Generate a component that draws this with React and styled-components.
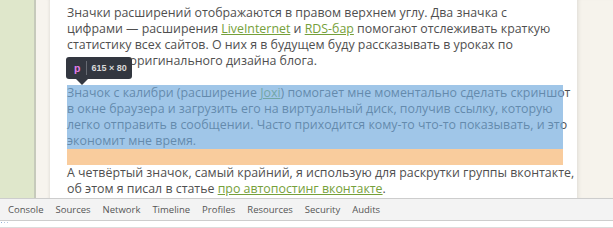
import React from "react";
import styled, { createGlobalStyle } from "styled-components";

const GlobalStyle = createGlobalStyle`
  html, body {
    margin: 0;
    padding: 0;
    overflow: hidden;
    background: #fff;
  }
`;

const tabs = [
  "Console",
  "Sources",
  "Network",
  "Timeline",
  "Profiles",
  "Resources",
  "Security",
  "Audits",
];

function App() {
  return (
    <Page>
      <GlobalStyle />
      <Viewport>
        <SiteSidebar />
        <Gutter />
        <Article>
          <Paragraph>
            Значки расширений отображаются в правом верхнем углу. Два значка с
            <br />
            цифрами — расширения <TextLink>LiveInternet</TextLink> и{" "}
            <TextLink>RDS-бар</TextLink> помогают отслеживать краткую
            <br />
            статистику всех сайтов. О них я в будущем буду рассказывать в уроках по
            <br />
            созданию оригинального дизайна блога.
          </Paragraph>
          <Highlighted>
            <Tooltip>
              <TagName>p</TagName>
              <Divider />
              <Size>615 × 80</Size>
            </Tooltip>
            Значок с калибри (расширение <TextLink>Joxi</TextLink>) помогает мне
            моментально сделать скриншот
            <br />
            в окне браузера и загрузить его на виртуальный диск, получив ссылку, которую
            <br />
            легко отправить в сообщении. Часто приходится кому-то что-то показывать, и это
            <br />
            экономит мне время.
          </Highlighted>
          <Paragraph>
            А четвёртый значок, самый крайний, я использую для раскрутки группы вконтакте,
            <br />
            об этом я писал в статье <TextLink>про автопостинг вконтакте</TextLink>.
          </Paragraph>
        </Article>
        <RightSide />
      </Viewport>
      <DevTools>
        <TabBar>
          {tabs.map((t) => (
            <Tab key={t}>{t}</Tab>
          ))}
        </TabBar>
        <ConsoleLine>
          <svg width="12" height="4" viewBox="0 0 12 4">
            <rect x="1" y="1" width="1" height="1" fill="#8fb0d8" />
            <rect x="4" y="1" width="1" height="1" fill="#b5c8e0" />
            <rect x="7" y="1" width="1" height="1" fill="#b5c8e0" />
          </svg>
        </ConsoleLine>
      </DevTools>
    </Page>
  );
}

const Page = styled.div`
  width: 613px;
  height: 228px;
  display: flex;
  flex-direction: column;
  overflow: hidden;
`;

const Viewport = styled.div`
  height: 198px;
  display: flex;
  overflow: hidden;
`;

const SiteSidebar = styled.div`
  width: 34px;
  flex-shrink: 0;
  background: #dfe7cb;
  border-right: 2px solid #c6cabb;
`;

const Gutter = styled.div`
  width: 14px;
  flex-shrink: 0;
  background: #f7f4ee;
  box-shadow: inset -3px 0 3px -2px rgba(0, 0, 0, 0.08);
`;

const Article = styled.div`
  width: 510px;
  flex-shrink: 0;
  background: #fff;
  padding: 5px 0 0 17px;
  font-family: "Open Sans", "Noto Sans", sans-serif;
  font-size: 12.38px;
  line-height: 16px;
  color: #4f4f4f;
`;

const RightSide = styled.div`
  flex: 1;
  background: #f6f3ec;
  box-shadow: inset 4px 0 4px -3px rgba(0, 0, 0, 0.1);
`;

const Paragraph = styled.p`
  margin: 0 0 16px;
  white-space: nowrap;
`;

const Highlighted = styled(Paragraph)`
  position: relative;
  width: 496px;

  &::after {
    content: "";
    position: absolute;
    inset: 0;
    background: rgba(111, 168, 220, 0.66);
  }

  &::before {
    content: "";
    position: absolute;
    left: 0;
    right: 0;
    top: 100%;
    height: 16px;
    background: rgba(246, 178, 107, 0.66);
  }
`;

const TextLink = styled.a`
  color: #76a03a;
  text-decoration: underline;
`;

const Tooltip = styled.div`
  position: absolute;
  z-index: 2;
  left: -1px;
  top: -28px;
  height: 22px;
  display: flex;
  align-items: center;
  padding: 0 5px 0 8px;
  background: #333740;
  border-radius: 3px;
  font-family: "Liberation Sans", Arial, sans-serif;
  font-size: 9px;
  line-height: 1;

  &::after {
    content: "";
    position: absolute;
    left: 10px;
    top: 100%;
    border: 6px solid transparent;
    border-top-color: #333740;
    border-bottom: 0;
  }
`;

const TagName = styled.span`
  color: #e37ce8;
  font-weight: bold;
  font-size: 10.5px;
`;

const Divider = styled.span`
  width: 1px;
  height: 14px;
  margin: 0 4px 0 6px;
  background: #666a72;
`;

const Size = styled.span`
  color: #d9d9d9;
  font-weight: bold;
`;

const DevTools = styled.div`
  height: 30px;
  display: flex;
  flex-direction: column;
  background: #fff;
`;

const TabBar = styled.div`
  height: 21px;
  display: flex;
  align-items: center;
  padding-left: 2px;
  background: #f3f3f3;
  border-top: 1px solid #cdcdcd;
  border-bottom: 1px solid #cdcdcd;
  font-family: "Open Sans", "Liberation Sans", sans-serif;
  font-size: 9.5px;
  color: #555;
`;

const Tab = styled.div`
  padding: 0 6px;
`;

const ConsoleLine = styled.div`
  flex: 1;
  border-bottom: 1px solid #dcdcdc;
  display: flex;
  align-items: flex-start;
  overflow: hidden;
`;

export default App;
